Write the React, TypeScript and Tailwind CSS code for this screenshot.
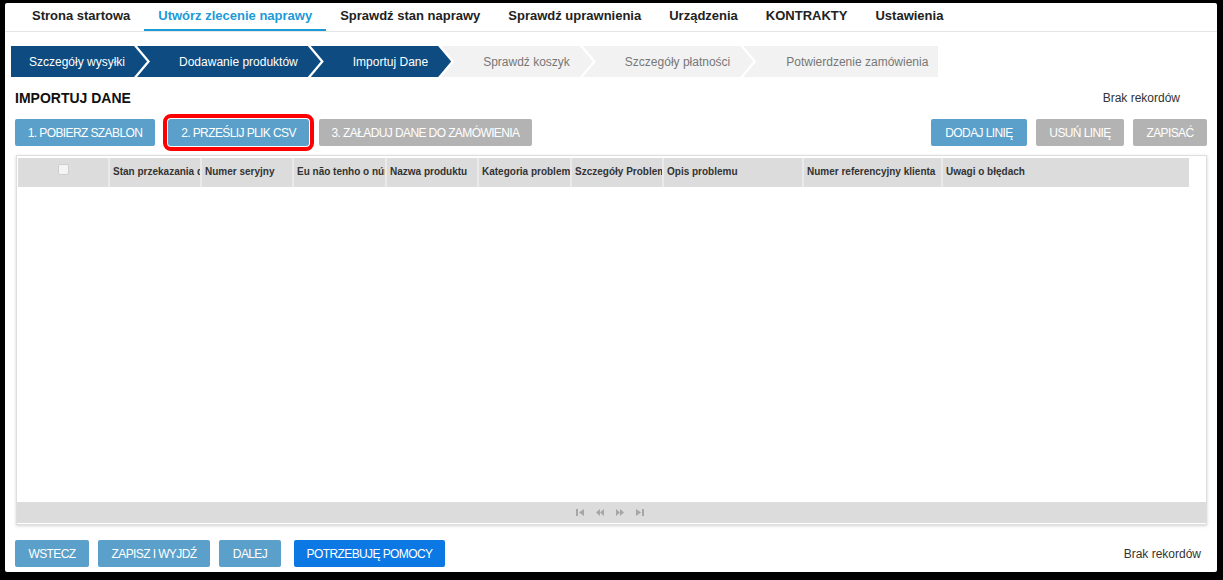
import React from 'react';

const navItems = [
  'Strona startowa',
  'Utwórz zlecenie naprawy',
  'Sprawdź stan naprawy',
  'Sprawdź uprawnienia',
  'Urządzenia',
  'KONTRAKTY',
  'Ustawienia',
];

const steps = [
  { label: 'Szczegóły wysyłki', done: true },
  { label: 'Dodawanie produktów', done: true },
  { label: 'Importuj Dane', done: true },
  { label: 'Sprawdź koszyk', done: false },
  { label: 'Szczegóły płatności', done: false },
  { label: 'Potwierdzenie zamówienia', done: false },
];

const columns = [
  { label: 'Stan przekazania do', w: 'w-[92px]' },
  { label: 'Numer seryjny', w: 'w-[92px]' },
  { label: 'Eu não tenho o número', w: 'w-[93px]' },
  { label: 'Nazwa produktu', w: 'w-[92px]' },
  { label: 'Kategoria problemu', w: 'w-[93px]' },
  { label: 'Szczegóły Problemu', w: 'w-[92px]' },
  { label: 'Opis problemu', w: 'w-[140px]' },
  { label: 'Numer referencyjny klienta', w: 'w-[139px]' },
  { label: 'Uwagi o błędach', w: 'flex-1' },
];

const Step = ({ label, done, index, last }: { label: string; done: boolean; index: number; last: boolean }) => {
  // chevron shape: first has flat left edge, last has flat right edge
  let shape = '[clip-path:polygon(0_0,calc(100%_-_13px)_0,100%_50%,calc(100%_-_13px)_100%,0_100%,13px_50%)] pl-[42px] pr-[23px] -ml-[10px]';
  if (index === 0) shape = '[clip-path:polygon(0_0,calc(100%_-_13px)_0,100%_50%,calc(100%_-_13px)_100%,0_100%)] pl-[18px] pr-[22px]';
  if (last) shape = '[clip-path:polygon(0_0,100%_0,100%_100%,0_100%,13px_50%)] pl-[43px] pr-[10px] -ml-[10px]';
  return (
    <div
      className={`h-[31px] flex items-center text-[12px] whitespace-nowrap ${shape} ${
        done ? 'bg-[#0d4b80] text-white' : 'bg-[#f2f2f2] text-[#777777]'
      }`}
    >
      {label}
    </div>
  );
};

const Btn = ({ children, tone, className = '' }: { children: React.ReactNode; tone: 'blue' | 'gray' | 'bright'; className?: string }) => {
  const toneCls =
    tone === 'blue' ? 'bg-[#5aa0ca]' : tone === 'gray' ? 'bg-[#b3b3b3]' : 'bg-[#0b78e3]';
  return (
    <button
      className={`h-[27px] px-[12px] text-white text-[12px] tracking-[-0.6px] uppercase rounded-[2px] whitespace-nowrap ${toneCls} ${className}`}
    >
      {children}
    </button>
  );
};

const PagerIcon = ({ kind }: { kind: 'first' | 'prev' | 'next' | 'last' }) => (
  <svg width="8" height="7" viewBox="0 0 8 7" className="fill-[#a6a6a6]">
    {kind === 'first' && (
      <>
        <rect x="0" y="0" width="2" height="7" />
        <polygon points="8,0 8,7 3,3.5" />
      </>
    )}
    {kind === 'prev' && (
      <>
        <polygon points="4,0 4,7 0,3.5" />
        <polygon points="8,0 8,7 4,3.5" />
      </>
    )}
    {kind === 'next' && (
      <>
        <polygon points="0,0 0,7 4,3.5" />
        <polygon points="4,0 4,7 8,3.5" />
      </>
    )}
    {kind === 'last' && (
      <>
        <polygon points="0,0 0,7 5,3.5" />
        <rect x="6" y="0" width="2" height="7" />
      </>
    )}
  </svg>
);

export default function App() {
  return (
    <div className="w-[1223px] h-[580px] bg-black font-['Liberation_Sans',Arial,sans-serif] text-[#222222]">
      <div className="w-full h-full border-l-[5px] border-t-[3px] border-r-[6px] border-b-[8px] border-black">
        <div className="w-full h-full bg-white rounded-[2px] flex flex-col overflow-hidden">
          {/* Top navigation */}
          <div className="flex h-[29px] pl-[13px] border-b border-[#e6e6e6]">
            {navItems.map((item, i) => (
              <div
                key={item}
                className={`px-[14px] flex items-center text-[13px] font-bold border-b-2 ${
                  i === 1 ? 'text-[#1d9ad8] border-[#1d9ad8]' : 'border-transparent'
                }`}
              >
                {item}
              </div>
            ))}
          </div>

          {/* Wizard steps */}
          <div className="flex pl-[6px] mt-[14px]">
            {steps.map((s, i) => (
              <Step key={s.label} label={s.label} done={s.done} index={i} last={i === steps.length - 1} />
            ))}
          </div>

          {/* Heading */}
          <div className="flex items-center justify-between h-[18px] mt-[12px] pl-[10px] pr-[37px]">
            <h2 className="text-[14px] font-bold text-[#111111]">IMPORTUJ DANE</h2>
            <span className="text-[12px] text-[#333333]">Brak rekordów</span>
          </div>

          {/* Action buttons */}
          <div className="flex items-center justify-between mt-[12px] pl-[10px] pr-[10px]">
            <div className="flex items-center gap-[10px]">
              <Btn tone="blue" className="w-[140px]">1. Pobierz szablon</Btn>
              <Btn tone="blue" className="ml-[3px] outline-4 outline-[#ff0000] outline-offset-[1px] rounded-[3px] w-[141px]">
                2. Prześlij plik CSV
              </Btn>
              <Btn tone="gray" className="w-[213px]">3. Załaduj dane do zamówienia</Btn>
            </div>
            <div className="flex items-center gap-[9px]">
              <Btn tone="blue" className="w-[96px]">Dodaj linię</Btn>
              <Btn tone="gray" className="w-[88px]">Usuń linię</Btn>
              <Btn tone="gray" className="w-[74px]">Zapisać</Btn>
            </div>
          </div>

          {/* Grid */}
          <div className="mt-[9px] ml-[11px] mr-[10px] h-[370px] border border-[#dedede] shadow-[0_1px_3px_rgba(0,0,0,0.18)] flex flex-col">
            <div className="pt-[2px] pl-[1px] pr-[17px]">
              <div className="flex h-[29px] bg-[#dcdcdc]">
                <div className="w-[92px] flex items-center justify-center border-r-2 border-[#eaeaea]">
                  <span className="w-[11px] h-[11px] mt-[-6px] rounded-[2px] bg-[#f4f4f4] border border-[#cfcfcf]" />
                </div>
                {columns.map((c, i) => (
                  <div
                    key={c.label}
                    className={`${c.w} flex items-center pl-[3px] overflow-hidden whitespace-nowrap text-[10px] font-bold text-[#333333] ${
                      i < columns.length - 1 ? 'border-r-2 border-[#eaeaea]' : ''
                    }`}
                  >
                    <span className="mt-[-2px]">{c.label}</span>
                  </div>
                ))}
              </div>
            </div>
            <div className="flex-1" />
            <div className="h-[21px] bg-[#dcdcdc] flex items-center justify-center gap-[12px] pr-[4px] mb-[1px]">
              <PagerIcon kind="first" />
              <PagerIcon kind="prev" />
              <PagerIcon kind="next" />
              <PagerIcon kind="last" />
            </div>
          </div>

          {/* Footer buttons */}
          <div className="flex items-center justify-between mt-[15px] pl-[10px] pr-[16px]">
            <div className="flex items-center gap-[9px]">
              <Btn tone="blue" className="h-[26px] w-[74px]">Wstecz</Btn>
              <Btn tone="blue" className="h-[26px] w-[112px]">Zapisz i wyjdź</Btn>
              <Btn tone="blue" className="h-[26px] w-[62px]">Dalej</Btn>
              <Btn tone="bright" className="h-[26px] w-[151px] ml-[4px]">Potrzebuję pomocy</Btn>
            </div>
            <span className="text-[12px] text-[#333333] mt-[1px]">Brak rekordów</span>
          </div>
        </div>
      </div>
    </div>
  );
}
